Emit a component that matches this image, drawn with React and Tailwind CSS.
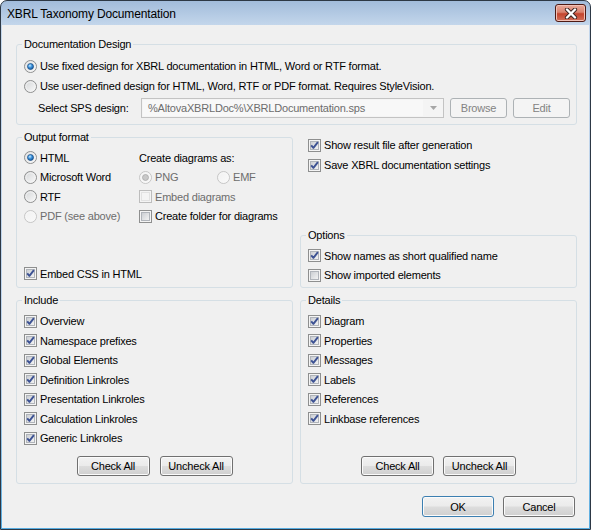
import React, { useId } from "react";

function Radio({ checked, disabled, label, className = "" }) {
  const id = useId().replace(/:/g, "");
  return (
    <div className={`flex items-center gap-[3px] h-[19.5px] ${className}`}>
      <svg width="13" height="13" viewBox="0 0 13 13" className="shrink-0">
        <defs>
          <linearGradient id={`o${id}`} x1="0" y1="0" x2="1" y2="1">
            <stop offset="0" stopColor={disabled ? "#f0f0f0" : "#d2d4d6"} />
            <stop offset="1" stopColor={disabled ? "#fafafa" : "#fbfbfb"} />
          </linearGradient>
          <radialGradient id={`d${id}`} cx="40%" cy="35%" r="70%">
            <stop offset="0" stopColor="#c9ecff" />
            <stop offset="0.45" stopColor="#3f95de" />
            <stop offset="1" stopColor="#0d4f93" />
          </radialGradient>
        </defs>
        <circle cx="6.5" cy="6.5" r="6" fill={`url(#o${id})`} stroke={disabled ? "#c5c5c5" : "#8e8f8f"} />
        <circle cx="6.5" cy="6.5" r="4.6" fill="none" stroke={disabled ? "#f7f7f7" : "#f4f4f4"} strokeWidth="0.8" />
        {checked && (
          <circle
            cx="6.5"
            cy="6.5"
            r="3"
            fill={disabled ? "#c8c8c8" : `url(#d${id})`}
            stroke={disabled ? "#a5a5a5" : "#1b4f86"}
            strokeWidth="0.7"
          />
        )}
      </svg>
      <span className={disabled ? "text-[#6d6d6d]" : "text-black"}>{label}</span>
    </div>
  );
}

function Check({ checked, disabled, label, className = "", h = "h-[19.5px]" }) {
  const id = useId().replace(/:/g, "");
  return (
    <div className={`flex items-center gap-[3px] ${h} ${className}`}>
      <svg width="13" height="13" viewBox="0 0 13 13" className="shrink-0">
        <defs>
          <linearGradient id={`c${id}`} x1="0" y1="0" x2="1" y2="1">
            <stop offset="0" stopColor={disabled ? "#f4f4f4" : "#c9ccd1"} />
            <stop offset="1" stopColor={disabled ? "#f4f4f4" : "#f5f5f5"} />
          </linearGradient>
        </defs>
        <rect x="0.5" y="0.5" width="12" height="12" fill={disabled ? "#f4f4f4" : "#f4f4f4"} stroke={disabled ? "#bdbdbd" : "#8e8f8f"} />
        <rect x="2.5" y="2.5" width="8" height="8" fill={`url(#c${id})`} stroke={disabled ? "#e2e2e2" : "#b0b4ba"} />
        {checked && (
          <path d="M3.2 6.4 L5.4 8.9 L9.9 3.2" fill="none" stroke="#3d5293" strokeWidth="1.9" strokeLinejoin="round" />
        )}
      </svg>
      <span className={disabled ? "text-[#6d6d6d]" : "text-black"}>{label}</span>
    </div>
  );
}

function Button({ children, className = "", disabled, isDefault }) {
  let cls =
    "flex items-center justify-center rounded-[3px] border bg-[linear-gradient(#f2f2f2_0%,#ebebeb_48%,#dddddd_52%,#cfcfcf_100%)] shadow-[inset_0_0_0_1px_#fbfbfb] text-black";
  if (disabled) cls = "flex items-center justify-center rounded-[3px] border border-[#adb2b5] bg-[#f4f4f4] text-[#838383]";
  else if (isDefault) cls += " border-[#3c7fb1] shadow-[inset_0_0_0_1px_#9fdcf7]";
  else cls += " border-[#707070]";
  return <div className={`${cls} ${className}`}>{children}</div>;
}

function Group({ legend, className = "", children }) {
  return (
    <fieldset className={`rounded-[3px] border border-[#d5dfe5] ${className}`}>
      <legend className="ml-[5px] px-[2px] h-[16px] leading-[16px]">{legend}</legend>
      {children}
    </fieldset>
  );
}

export default function App() {
  const include = [
    "Overview",
    "Namespace prefixes",
    "Global Elements",
    "Definition Linkroles",
    "Presentation Linkroles",
    "Calculation Linkroles",
    "Generic Linkroles",
  ];
  const details = ["Diagram", "Properties", "Messages", "Labels", "References", "Linkbase references"];

  return (
    <div className="w-[591px] h-[530px] font-['Liberation_Sans',Arial,sans-serif] text-[11px] tracking-[-0.2px] leading-[14px] text-black">
      <div className="w-full h-full flex flex-col rounded-t-[7px] border border-[#2d3845] bg-[linear-gradient(to_bottom,#a2bcdb_0px,#c3d6eb_24px,#bcd3ec_380px,#56ace0_528px)]">
        <div className="h-[24px] shrink-0 flex items-start justify-between pl-[6px] pr-[4px]">
          <div className="mt-[5px] text-[12px] tracking-[-0.15px] leading-[16px] text-black">XBRL Taxonomy Documentation</div>
          <div className="mt-[3px] w-[31px] h-[18px] rounded-[3px] border border-[#4e1a14] bg-[linear-gradient(#e9a99a_0%,#d98370_45%,#c4442d_55%,#d2705b_100%)] shadow-[inset_0_0_0_1px_#f1c1b6] flex items-center justify-center">
            <svg width="14" height="11" viewBox="0 0 14 11">
              <path d="M3 1.5 L11 9.5 M11 1.5 L3 9.5" stroke="#3b2320" strokeWidth="4.2" strokeLinecap="round" fill="none" />
              <path d="M3 1.5 L11 9.5 M11 1.5 L3 9.5" stroke="#ffffff" strokeWidth="2.4" strokeLinecap="round" fill="none" />
            </svg>
          </div>
        </div>

        <div className="flex-1 mx-[1px] mb-[1px] bg-[#f0f0f0] pl-[14px] pt-[11px] flex flex-col">
          <Group legend="Documentation Design" className="w-[561px] h-[89px]">
            <div className="pl-[7px] pt-[4px]">
              <div className="h-[20px] flex items-center">
                <Radio checked label="Use fixed design for XBRL documentation in HTML, Word or RTF format." className="h-[20px]" />
              </div>
              <div className="h-[20px] flex items-center">
                <Radio label="Use user-defined design for HTML, Word, RTF or PDF format. Requires StyleVision." className="h-[20px]" />
              </div>
              <div className="mt-[2px] h-[20px] flex items-center">
                <div className="w-[117px] pl-[14px]">Select SPS design:</div>
                <div className="w-[303px] h-[20px] flex border border-[#c3c3c3] bg-[#f4f4f4]">
                  <div className="flex-1 flex items-center pl-[5px] text-[#6d6d6d] bg-[#f8f8f8] my-[1px] ml-[1px]">
                    {"%AltovaXBRLDoc%\\XBRLDocumentation.sps"}
                  </div>
                  <div className="w-[20px] flex items-center justify-center">
                    <svg width="7" height="4" viewBox="0 0 7 4">
                      <path d="M0 0 H7 L3.5 4 Z" fill="#a6a6a6" />
                    </svg>
                  </div>
                </div>
                <Button disabled className="ml-[6px] w-[57px] h-[20px]">Browse</Button>
                <Button disabled className="ml-[6px] w-[57px] h-[20px]">Edit</Button>
              </div>
            </div>
          </Group>

          <div className="mt-[4px] flex gap-[7px]">
            <Group legend="Output format" className="w-[277px] h-[159px] flex flex-col">
              <div className="flex flex-col h-full">
                <div className="pl-[7px] pt-[3px] grid grid-cols-[115px_1fr]">
                  <div className="flex flex-col">
                    <Radio checked label="HTML" />
                    <Radio label="Microsoft Word" />
                    <Radio label="RTF" />
                    <Radio disabled label="PDF (see above)" />
                  </div>
                  <div className="flex flex-col">
                    <div className="h-[19.5px] flex items-center">Create diagrams as:</div>
                    <div className="flex">
                      <Radio checked disabled label="PNG" className="w-[78px]" />
                      <Radio disabled label="EMF" />
                    </div>
                    <Check disabled label="Embed diagrams" />
                    <Check label="Create folder for diagrams" />
                  </div>
                </div>
                <div className="mt-auto mb-[3.5px] pl-[7px]">
                  <Check checked label="Embed CSS in HTML" />
                </div>
              </div>
            </Group>

            <div className="w-[277px] h-[159px] flex flex-col">
              <div className="pl-[8px] pt-[6px]">
                <Check checked h="h-[20px]" label="Show result file after generation" />
                <Check checked h="h-[20px]" label="Save XBRL documentation settings" />
              </div>
              <Group legend="Options" className="mt-auto w-[277px] h-[61px]">
                <div className="pl-[7px] pt-[3px]">
                  <Check checked label="Show names as short qualified name" />
                  <Check label="Show imported elements" />
                </div>
              </Group>
            </div>
          </div>

          <div className="mt-[4px] flex gap-[7px]">
            <Group legend="Include" className="w-[277px] h-[192px]">
              <div className="pl-[7px] pt-[3.25px]">
                {include.map((t) => (
                  <Check key={t} checked label={t} />
                ))}
              </div>
              <div className="mt-[8px] flex justify-center gap-[10px]">
                <Button className="w-[73px] h-[20px]">Check All</Button>
                <Button className="w-[73px] h-[20px]">Uncheck All</Button>
              </div>
            </Group>
            <Group legend="Details" className="w-[277px] h-[192px]">
              <div className="pl-[7px] pt-[3.25px]">
                {details.map((t) => (
                  <Check key={t} checked label={t} />
                ))}
                <div className="h-[19.5px]" />
              </div>
              <div className="mt-[8px] flex justify-center gap-[9px]">
                <Button className="w-[73px] h-[20px]">Check All</Button>
                <Button className="w-[73px] h-[20px]">Uncheck All</Button>
              </div>
            </Group>
          </div>

          <div className="mt-[12px] pr-[14px] flex justify-end gap-[9px]">
            <Button isDefault className="w-[72px] h-[21px]">OK</Button>
            <Button className="w-[72px] h-[21px]">Cancel</Button>
          </div>
        </div>
      </div>
    </div>
  );
}
